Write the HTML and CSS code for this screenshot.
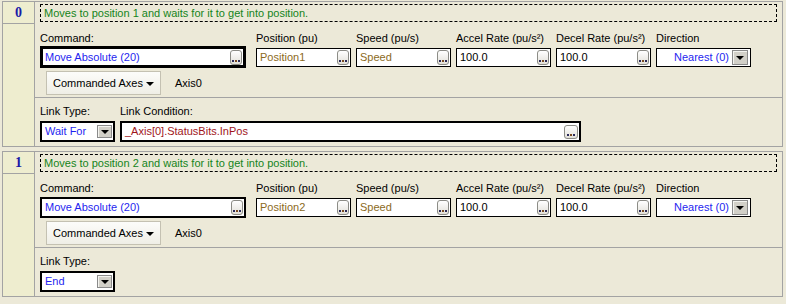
FILE: index.html
```html
<!DOCTYPE html>
<html lang="en">
<head>
    <meta charset="UTF-8">
    <title>Motion Sequence</title>
    <link rel="stylesheet" href="styles.css">
</head>
<body>
    <div class="steps">
        <div class="step">
            <div class="step-index"><div class="step-num">0</div></div>
            <div class="step-body">
                <div class="step-comment">
                    <div class="comment-box">Moves to position 1 and waits for it to get into position.</div>
                </div>
                <div class="step-command">
                    <div class="fields">
                        <div class="field field-command">
                            <label>Command:</label>
                            <div class="box box-focus"><span class="val val-blue">Move Absolute (20)</span><span class="dots-btn"><i></i><i></i><i></i></span></div>
                        </div>
                        <div class="field">
                            <label>Position (pu)</label>
                            <div class="box"><span class="val val-tag">Position1</span><span class="dots-btn"><i></i><i></i><i></i></span></div>
                        </div>
                        <div class="field">
                            <label>Speed (pu/s)</label>
                            <div class="box"><span class="val val-tag">Speed</span><span class="dots-btn"><i></i><i></i><i></i></span></div>
                        </div>
                        <div class="field">
                            <label>Accel Rate (pu/s²)</label>
                            <div class="box"><span class="val">100.0</span><span class="dots-btn"><i></i><i></i><i></i></span></div>
                        </div>
                        <div class="field">
                            <label>Decel Rate (pu/s²)</label>
                            <div class="box"><span class="val">100.0</span><span class="dots-btn"><i></i><i></i><i></i></span></div>
                        </div>
                        <div class="field">
                            <label>Direction</label>
                            <div class="box box-select"><span class="val val-blue">Nearest (0)</span><span class="drop-btn"><b></b></span></div>
                        </div>
                    </div>
                    <div class="axes-row">
                        <div class="axes-btn">Commanded Axes<span class="caret"></span></div>
                        <span class="axes-name">Axis0</span>
                    </div>
                </div>
                <div class="step-link">
                    <div class="field field-linktype">
                        <label>Link Type:</label>
                        <div class="box box-link"><span class="val val-blue">Wait For</span><span class="drop-btn drop-small"><b></b></span></div>
                    </div>
                    <div class="field field-condition">
                        <label>Link Condition:</label>
                        <div class="box box-link"><span class="val val-red">_Axis[0].StatusBits.InPos</span><span class="dots-btn dots-sq"><i></i><i></i><i></i></span></div>
                    </div>
                </div>
            </div>
        </div>

        <div class="step">
            <div class="step-index"><div class="step-num">1</div></div>
            <div class="step-body">
                <div class="step-comment">
                    <div class="comment-box">Moves to position 2 and waits for it to get into position.</div>
                </div>
                <div class="step-command">
                    <div class="fields">
                        <div class="field field-command">
                            <label>Command:</label>
                            <div class="box box-plain"><span class="val val-blue">Move Absolute (20)</span><span class="dots-btn"><i></i><i></i><i></i></span></div>
                        </div>
                        <div class="field">
                            <label>Position (pu)</label>
                            <div class="box"><span class="val val-tag">Position2</span><span class="dots-btn"><i></i><i></i><i></i></span></div>
                        </div>
                        <div class="field">
                            <label>Speed (pu/s)</label>
                            <div class="box"><span class="val val-tag">Speed</span><span class="dots-btn"><i></i><i></i><i></i></span></div>
                        </div>
                        <div class="field">
                            <label>Accel Rate (pu/s²)</label>
                            <div class="box"><span class="val">100.0</span><span class="dots-btn"><i></i><i></i><i></i></span></div>
                        </div>
                        <div class="field">
                            <label>Decel Rate (pu/s²)</label>
                            <div class="box"><span class="val">100.0</span><span class="dots-btn"><i></i><i></i><i></i></span></div>
                        </div>
                        <div class="field">
                            <label>Direction</label>
                            <div class="box box-select"><span class="val val-blue">Nearest (0)</span><span class="drop-btn"><b></b></span></div>
                        </div>
                    </div>
                    <div class="axes-row">
                        <div class="axes-btn">Commanded Axes<span class="caret"></span></div>
                        <span class="axes-name">Axis0</span>
                    </div>
                </div>
                <div class="step-link">
                    <div class="field field-linktype">
                        <label>Link Type:</label>
                        <div class="box box-link"><span class="val val-blue">End</span><span class="drop-btn drop-small"><b></b></span></div>
                    </div>
                </div>
            </div>
        </div>
    </div>
</body>
</html>
```

FILE: styles.css
```css
body {
    margin: 0;
    background-color: #ece9d8;
    font-family: 'Liberation Sans', Arial, sans-serif;
    font-size: 11px;
    color: #000000;
}
.steps {
    padding: 1px 3px 0 2px;
    display: flex;
    flex-direction: column;
    gap: 4px;
}
.step {
    display: flex;
    border: 1px solid #a3a3a3;
}
.step-index {
    width: 31px;
    background-color: #eeedcf;
    border-right: 1px solid #a3a3a3;
}
.step-num {
    height: 21px;
    border-bottom: 1px solid #a3a3a3;
    display: flex;
    justify-content: center;
    align-items: center;
    font-family: 'Liberation Serif', serif;
    font-weight: bold;
    font-size: 14px;
    color: #1a1aa8;
}
.step-body {
    flex: 1;
}
.step-comment {
    height: 21px;
    padding: 2px 5px 0 5px;
    box-sizing: border-box;
}
.comment-box {
    height: 18px;
    box-sizing: border-box;
    border: 1px dashed #000000;
    padding-left: 3px;
    line-height: 16px;
    color: #14841a;
}
.step-command {
    height: 75px;
    box-sizing: border-box;
    padding: 9px 0 0 5px;
    border-bottom: 1px solid #a3a3a3;
}
.fields {
    display: flex;
    gap: 5px;
}
.field {
    display: flex;
    flex-direction: column;
    width: 95px;
}
.field label {
    line-height: 13px;
    height: 13px;
}
.field-command {
    width: 206px;
    margin-right: 5px;
}
.box {
    margin-top: 3px;
    height: 19px;
    box-sizing: border-box;
    border: 1px solid #000000;
    background-color: #ffffff;
    display: flex;
    align-items: center;
    justify-content: space-between;
    padding: 0 1px 0 3px;
}
.box-focus {
    margin-top: 1px;
    height: 22px;
    border-width: 3px;
    padding-left: 2px;
}
.box-plain {
    margin-top: 2px;
    height: 21px;
    border-width: 2px;
    padding-left: 3px;
}
.val {
    white-space: nowrap;
    line-height: 13px;
}
.val-blue { color: #1f1ff0; }
.val-tag { color: #8c6a1c; }
.val-red { color: #a0151a; }
.dots-btn {
    width: 12px;
    height: 15px;
    box-sizing: border-box;
    border: 1px solid #8c8c86;
    border-radius: 3px;
    background: linear-gradient(#ffffff, #e2e0d8);
    display: flex;
    justify-content: center;
    align-items: flex-end;
    gap: 1px;
    padding-bottom: 2px;
}
.dots-btn i {
    width: 2px;
    height: 2px;
    background-color: #2a2a5a;
}
.dots-btn i:nth-child(2) { background-color: #7a4a20; }
.dots-sq {
    width: 14px;
    height: 14px;
}
.box-select {
    justify-content: flex-end;
    gap: 3px;
    padding-right: 2px;
}
.drop-btn {
    width: 16px;
    height: 15px;
    box-sizing: border-box;
    border: 1px solid #8a8a8a;
    background-color: #d2d0c8;
    box-shadow: inset 1px 1px 0 #f4f4f0;
    display: flex;
    justify-content: center;
    align-items: flex-end;
    padding-bottom: 4px;
}
.drop-btn b {
    width: 0;
    height: 0;
    border-left: 4px solid transparent;
    border-right: 4px solid transparent;
    border-top: 4px solid #000000;
}
.axes-row {
    display: flex;
    align-items: center;
    margin-top: 3px;
}
.axes-btn {
    margin-left: 6px;
    width: 115px;
    height: 24px;
    box-sizing: border-box;
    border: 1px solid #c4c1b2;
    background: linear-gradient(#fcfcfa, #efeee6);
    display: flex;
    align-items: center;
    justify-content: space-between;
    padding: 0 6px 0 6px;
}
.caret {
    width: 0;
    height: 0;
    border-left: 4px solid transparent;
    border-right: 4px solid transparent;
    border-top: 4px solid #000000;
    margin-top: 2px;
}
.axes-name {
    margin-left: 14px;
}
.step-link {
    height: 48px;
    box-sizing: border-box;
    padding: 7px 0 0 5px;
    display: flex;
    gap: 5px;
}
.field-linktype {
    width: 75px;
}
.field-condition {
    width: 461px;
}
.box-link {
    height: 21px;
    border-width: 2px;
    padding: 0 1px 0 3px;
}
.drop-small {
    width: 15px;
    height: 13px;
    padding-bottom: 3px;
}
```
